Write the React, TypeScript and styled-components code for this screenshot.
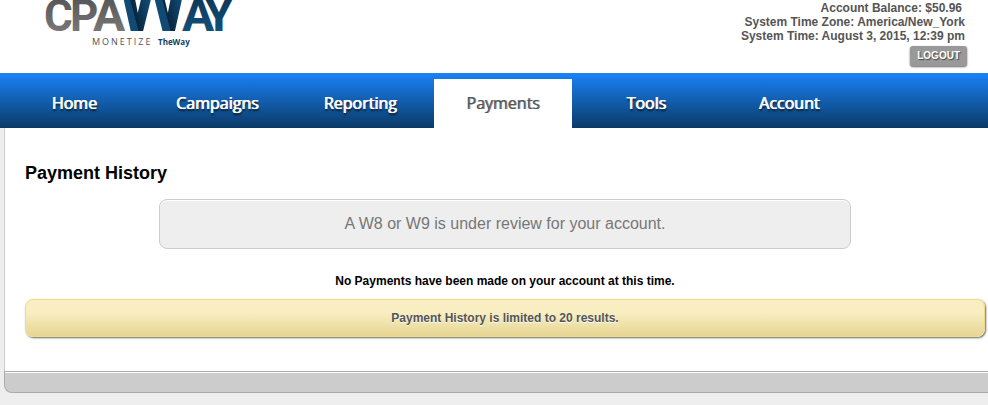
import React from "react";
import styled, { createGlobalStyle, css } from "styled-components";

const GlobalStyle = createGlobalStyle`
  * { box-sizing: border-box; }
  body {
    margin: 0;
    background: #eee;
    color: #000;
    font-family: Arial, "Liberation Sans", sans-serif;
    font-size: 12px;
    line-height: 14px;
    overflow: hidden;
  }
`;

const Header = styled.header`
  display: flex;
  justify-content: space-between;
  align-items: flex-start;
  height: 73px;
  padding-right: 21px;
  background: #fff;
`;

const HomeLink = styled.a`
  display: block;
  margin-left: 40px;
`;

const LogoArt = styled.svg`
  display: block;
`;

const AccountInfo = styled.div`
  display: flex;
  flex-direction: column;
  align-items: flex-end;
  padding-top: 1px;
  color: #555;
  font-weight: bold;
  text-align: right;
`;

const InfoLine = styled.div<{ $inset?: boolean }>`
  padding-right: ${(p) => (p.$inset ? 5 : 2)}px;
`;

const LogoutButton = styled.button`
  height: 20px;
  margin: 3px 0 0;
  padding: 0 7px;
  border: 0;
  border-radius: 3px;
  background: #999;
  box-shadow: 0 1px 2px #666;
  color: #fff;
  font: bold 10px/20px Arial, "Liberation Sans", sans-serif;
  text-shadow: 1px 1px 1px #444;
`;

const Nav = styled.nav`
  display: flex;
  align-items: flex-end;
  gap: 5px;
  height: 55px;
  padding-left: 5px;
  background: linear-gradient(#1a82f7, #0a3a67);
`;

const NavLink = styled.a<{ $active?: boolean }>`
  width: 138px;
  height: 49px;
  color: #fff;
  font: 400 16px/49px "Open Sans", sans-serif;
  text-align: center;
  text-decoration: none;
  text-shadow: 1px 0 0 #fff, 1px 2px 2px #111;
  ${(p) =>
    p.$active &&
    css`
      background: #fff;
      color: #555;
      text-shadow: 1px 0 0 #888;
    `}
`;

const Panel = styled.div`
  margin-left: 4px;
`;

const Content = styled.main`
  padding: 34px 3px 34px 20px;
  border-left: 1px solid #ccc;
  background: #fff;
`;

const Title = styled.h1`
  margin: 0 0 15px;
  font-size: 18px;
  line-height: 22px;
`;

const ReviewNotice = styled.div`
  width: 72%;
  margin: 0 auto 25px;
  padding: 14px;
  border: 1px solid #ccc;
  border-radius: 8px;
  background: #eee;
  box-shadow: inset 0 1px 0 #fff;
  color: #777;
  font-size: 16px;
  line-height: 20px;
  text-align: center;
`;

const EmptyMessage = styled.p`
  margin: 0 0 11px;
  font-weight: bold;
  text-align: center;
`;

const LimitNotice = styled.div`
  padding: 10px;
  border: 1px solid #f0dc82;
  border-radius: 8px;
  background: linear-gradient(#f8eec2 35%, #e6d592);
  box-shadow: 1px 1px 2px #666;
  color: #555;
  font-weight: bold;
  line-height: 16px;
  text-align: center;
  text-shadow: 0 1px 0 #fff;
`;

const FooterBar = styled.footer`
  height: 22px;
  border: 1px solid #aaa;
  border-right: 0;
  border-bottom-left-radius: 8px;
  background: #ccc;
  box-shadow: inset 0 1px 0 #fff;
`;

const navItems = ["Home", "Campaigns", "Reporting", "Payments", "Tools", "Account"];

function Logo() {
  return (
    <LogoArt width="200" height="50" viewBox="40 0 200 50" role="img" aria-label="CPAWay">
      <defs>
        <linearGradient id="grey" x1="0" y1="-8" x2="0" y2="31" gradientUnits="userSpaceOnUse">
          <stop offset="0" stopColor="#505050" />
          <stop offset="1" stopColor="#777" />
        </linearGradient>
        <linearGradient id="navy" x1="0" y1="-8" x2="0" y2="31" gradientUnits="userSpaceOnUse">
          <stop offset="0" stopColor="#0b3350" />
          <stop offset="1" stopColor="#12507c" />
        </linearGradient>
        <linearGradient id="ribbon" x1="126" y1="31" x2="156" y2="23" gradientUnits="userSpaceOnUse" spreadMethod="repeat">
          <stop offset="0" stopColor="#124c76" />
          <stop offset="0.38" stopColor="#104a74" />
          <stop offset="0.4" stopColor="#08263c" />
          <stop offset="0.8" stopColor="#0e4066" />
          <stop offset="1" stopColor="#124c76" />
        </linearGradient>
      </defs>
      <g fontFamily="Roboto, sans-serif" fontSize="48" fontWeight="bold">
        <text fill="url(#grey)" fontSize="44" x="44" y="31">C</text>
        <text fill="url(#grey)" fontSize="44" x="70" y="31">P</text>
        <text fill="url(#grey)" x="93" y="31">A</text>
        <text fill="url(#ribbon)" fontSize="84" x="116" y="31">W</text>
        <text fill="url(#navy)" x="182" y="31">A</text>
        <text fill="url(#navy)" x="204" y="31">Y</text>
      </g>
      <g fontFamily='"Open Sans", sans-serif' fontSize="8">
        <text x="92" y="45" fill="#555" fontSize="9" letterSpacing="2">MONETIZE</text>
        <text x="158" y="45" fill="#0f4268" fontWeight="bold">TheWay</text>
      </g>
    </LogoArt>
  );
}

export default function App() {
  return (
    <>
      <GlobalStyle />
      <Header>
        <HomeLink href="#home"><Logo /></HomeLink>
        <AccountInfo>
          <InfoLine $inset>Account Balance: $50.96</InfoLine>
          <InfoLine>System Time Zone: America/New_York</InfoLine>
          <InfoLine>System Time: August 3, 2015, 12:39 pm</InfoLine>
          <LogoutButton type="button">LOGOUT</LogoutButton>
        </AccountInfo>
      </Header>
      <Nav>
        {navItems.map((item) => (
          <NavLink key={item} href={`#${item.toLowerCase()}`} $active={item === "Payments"}>
            {item}
          </NavLink>
        ))}
      </Nav>
      <Panel>
        <Content>
          <Title>Payment History</Title>
          <ReviewNotice>A W8 or W9 is under review for your account.</ReviewNotice>
          <EmptyMessage>No Payments have been made on your account at this time.</EmptyMessage>
          <LimitNotice>Payment History is limited to 20 results.</LimitNotice>
        </Content>
        <FooterBar />
      </Panel>
    </>
  );
}
